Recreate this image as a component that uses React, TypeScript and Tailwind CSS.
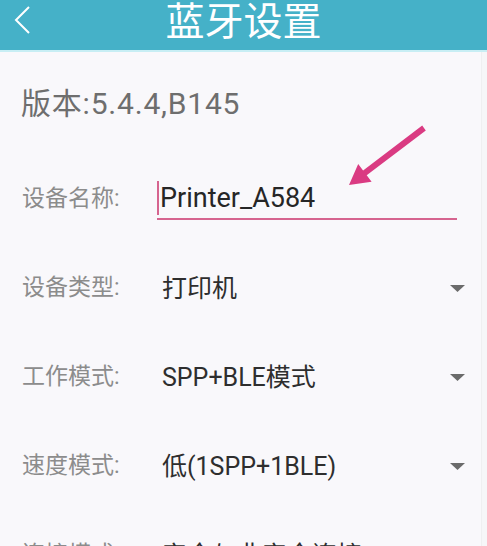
import React from "react";

const font = { fontFamily: 'Roboto, "Noto Sans CJK SC", sans-serif' };

function Caret() {
  return (
    <svg width="15" height="7" viewBox="0 0 15 7" className="shrink-0">
      <polygon points="0,0 15,0 7.5,7" fill="#6b6b6b" />
    </svg>
  );
}

function SelectRow({ label, value }: { label: string; value: string }) {
  return (
    <div className="flex h-[89px] items-center pl-[22px] pr-[16px]">
      <span className="w-[140px] shrink-0 text-[23px] text-[#8c8c8c]">{label}</span>
      <span className="flex-1 text-[25px] text-[#2e2e2e]">{value}</span>
      <Caret />
    </div>
  );
}

export default function App() {
  return (
    <div className="relative h-[546px] w-[487px] overflow-hidden bg-[#f9f8fb]" style={font}>
      {/* 顶部标题栏 */}
      <div className="relative flex h-[50px] items-center justify-center bg-[#45b1c8]">
        <svg width="20" height="34" viewBox="0 0 20 34" className="absolute left-[12px] top-[3px]">
          <polyline points="17,4 4,17 17,30" fill="none" stroke="#ffffff" strokeWidth="2" />
        </svg>
        <span className="pb-[5px] text-[39px] leading-none text-white">蓝牙设置</span>
      </div>
      <div className="h-[2px] bg-[#c8eef4]" />

      <div className="flex">
        <div className="flex-1">
          <div className="flex h-[102px] items-center pl-[21px] text-[30px] tracking-[0.8px] text-[#6e6e6e]">
            版本:5.4.4,B145
          </div>

          {/* 设备名称 输入框 */}
          <div className="flex h-[90px] items-center pl-[22px]">
            <span className="w-[135px] shrink-0 text-[23px] text-[#8c8c8c]">设备名称:</span>
            <div className="mt-[2px] flex w-[300px] items-center border-b-2 border-[#d6648f] pb-[3px]">
              <span className="h-[34px] w-[2px] bg-[#d6648f]" />
              <span className="ml-[1px] text-[27px] leading-[34px] text-[#262626]">Printer_A584</span>
            </div>
          </div>

          <SelectRow label="设备类型:" value="打印机" />
          <SelectRow label="工作模式:" value="SPP+BLE模式" />
          <SelectRow label="速度模式:" value="低(1SPP+1BLE)" />
          <SelectRow label="连接模式:" value="安全与非安全连接" />
        </div>
        <div className="w-[6px] shrink-0 border-l border-[#efeff1] bg-[#f6f6f8]" />
      </div>

      {/* 粉色箭头标注 */}
      <svg width="487" height="546" className="pointer-events-none absolute left-0 top-0">
        <polygon
          points="425.8,130.4 366.7,175.3 371.6,181.7 349,185 358.2,164.1 363.1,170.5 422.2,125.6"
          fill="#da3b82"
        />
      </svg>
    </div>
  );
}
